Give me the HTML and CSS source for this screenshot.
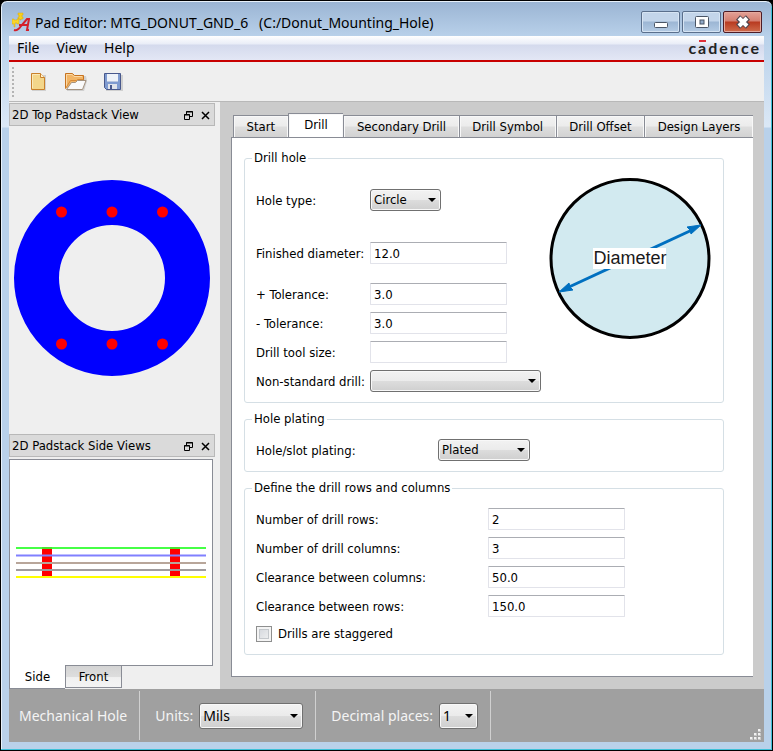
FILE: index.html
```
<!DOCTYPE html>
<html lang="en">
<head>
  <meta charset="UTF-8">
  <title>Pad Editor: MTG_DONUT_GND_6</title>
  <link rel="stylesheet" href="styles.css">
</head>
<body>
<div class="window">

  <header class="titlebar">
    <svg class="app-icon" width="18" height="20" viewBox="0 0 18 20">
      <path d="M6 1h5v2h-1v2h1v2H9v1H8V7H6V5h1V3H6z" fill="#f7cf1d" stroke="#d9a90c" stroke-width=".5"/>
      <path d="M0 7h2v1h3V7h2v5H5v-1H3v4H2v-3H0z" fill="#f9d52a" stroke="#d9a90c" stroke-width=".5"/>
      <path d="M2 18c3 1 5-1 7-4l6-7h2l-2 11h2" fill="none" stroke="#d3202b" stroke-width="2"/>
      <path d="M7 13h9" stroke="#d3202b" stroke-width="2"/>
    </svg>
    <h1>Pad Editor: MTG_DONUT_GND_6 &nbsp; (C:/Donut_Mounting_Hole)</h1>
    <div class="window-buttons">
      <button type="button" aria-label="Minimize">
        <svg width="16" height="16" viewBox="0 0 16 16"><rect x="1.500" y="8.500" width="13" height="5" rx="1" fill="#fff" stroke="#4a5565"/></svg>
      </button>
      <button type="button" aria-label="Maximize">
        <svg width="16" height="16" viewBox="0 0 16 16"><rect x="1.500" y="2.500" width="13" height="11" rx="1" fill="#fff" stroke="#4a5565"/><rect x="6" y="6" width="4" height="4" fill="#8fa9c8" stroke="#4a5565"/></svg>
      </button>
      <button type="button" class="close" aria-label="Close">
        <svg width="16" height="16" viewBox="0 0 16 16"><path d="M3 3.500l10 9M13 3.500l-10 9" stroke="#4e4650" stroke-width="6"/><path d="M4 4l8 8M12 4l-8 8" stroke="#fff" stroke-width="4"/></svg>
      </button>
    </div>
  </header>

  <div class="client">
    <nav class="menubar">
      <a href="#">File</a>
      <a href="#">View</a>
      <a href="#">Help</a>
      <span class="brand">c<span class="macron">a</span>dence</span>
    </nav>

    <div class="toolbar">
      <span class="handle"></span>
      <button type="button" aria-label="New">
        <svg width="24" height="24" viewBox="0 0 24 24">
          <path d="M5 5h14v16H5z" fill="#888" opacity=".3"/>
          <path d="M4.500 3.500h9l4 4v12h-13z" fill="#f3d68a" stroke="#c9812b"/>
          <path d="M5.500 18V4.500H13" fill="none" stroke="#fbe9ba"/>
          <path d="M13.500 3.500v4h4" fill="#fff3cf" stroke="#c9812b"/>
        </svg>
      </button>
      <button type="button" aria-label="Open">
        <svg width="24" height="24" viewBox="0 0 24 24">
          <path d="M3 6h19l1 5-3 10H3z" fill="#888" opacity=".3"/>
          <path d="M1.500 18.500v-15h7l2 2h9v5" fill="#f2b566" stroke="#c67321"/>
          <path d="M2.500 17V4.500H8l2 2h8" fill="none" stroke="#fbd9a6"/>
          <path d="M2.500 19.500l5-7h4l2-2h8.500l-3.500 9z" fill="#fafafa" stroke="#a5937f"/>
          <path d="M1.500 18.500l5-8h6l1-1h6" fill="none" stroke="#d68a38"/>
        </svg>
      </button>
      <button type="button" aria-label="Save">
        <svg width="24" height="24" viewBox="0 0 24 24">
          <path d="M5 5h17v16H5z" fill="#888" opacity=".3"/>
          <path d="M3.500 3.500h16v16h-14l-2-2z" fill="#7f9bd0" stroke="#48588c"/>
          <rect x="6" y="4" width="11" height="8" fill="#eef2f8"/>
          <path d="M6 11h11v1H6z" fill="#b9c6df"/>
          <rect x="7" y="14" width="9" height="5" fill="#dfe3ea"/>
          <rect x="9" y="15" width="2" height="4" fill="#48588c"/>
        </svg>
      </button>
    </div>

    <main class="workspace">
      <aside class="docks">
        <section class="dock">
          <div class="dock-title">
            <h2>2D Top Padstack View</h2>
            <button type="button" aria-label="Float">
              <svg width="9" height="9" viewBox="0 0 9 9"><path d="M2.500 3V.500h6v5H6M2 1h7M.500 3.500h5v5h-5zM0 4h6" fill="none" stroke="#000"/></svg>
            </button>
            <button type="button" aria-label="Close">
              <svg width="9" height="9" viewBox="0 0 9 9"><path d="M1 1l7 7M8 1L1 8" stroke="#000" stroke-width="1.500"/></svg>
            </button>
          </div>
          <div class="top-view">
            <svg width="196" height="196" viewBox="0 0 196 196">
              <circle cx="98" cy="98" r="75.500" fill="none" stroke="#00f" stroke-width="45"/>
              <g fill="#f00">
                <circle cx="47.500" cy="32" r="5.500"/><circle cx="98" cy="32" r="5.500"/><circle cx="148.500" cy="32" r="5.500"/>
                <circle cx="47.500" cy="164" r="5.500"/><circle cx="98" cy="164" r="5.500"/><circle cx="148.500" cy="164" r="5.500"/>
              </g>
            </svg>
          </div>
        </section>

        <section class="dock">
          <div class="dock-title">
            <h2>2D Padstack Side Views</h2>
            <button type="button" aria-label="Float">
              <svg width="9" height="9" viewBox="0 0 9 9"><path d="M2.500 3V.500h6v5H6M2 1h7M.500 3.500h5v5h-5zM0 4h6" fill="none" stroke="#000"/></svg>
            </button>
            <button type="button" aria-label="Close">
              <svg width="9" height="9" viewBox="0 0 9 9"><path d="M1 1l7 7M8 1L1 8" stroke="#000" stroke-width="1.500"/></svg>
            </button>
          </div>
          <div class="side-view">
            <svg width="192" height="32" viewBox="0 0 192 32">
              <path d="M27 0h10v30H27zM155 0h10v30h-10z" fill="#f00"/>
              <path d="M1 1h190" stroke="#3f3" stroke-width="2" opacity=".9"/>
              <path d="M1 8.500h190" stroke="#8080ff" stroke-width="2"/>
              <path d="M1 16h190" stroke="#b8a69a" stroke-width="2"/>
              <path d="M1 23h190" stroke="#a09c9e" stroke-width="2"/>
              <path d="M1 30h190" stroke="#ff0" stroke-width="2"/>
            </svg>
          </div>
          <div class="side-tabs">
            <button type="button" class="active">Side</button>
            <button type="button">Front</button>
          </div>
        </section>
      </aside>

      <div class="editor">
        <div class="tabs">
          <button type="button" class="first">Start</button>
          <button type="button" class="active">Drill</button>
          <button type="button">Secondary Drill</button>
          <button type="button">Drill Symbol</button>
          <button type="button">Drill Offset</button>
          <button type="button">Design Layers</button>
        </div>

        <form class="page">
          <fieldset>
            <legend>Drill hole</legend>
            <div class="hole">
              <div class="rows">
                <div class="row spaced">
                  <label for="hole-type">Hole type:</label>
                  <select id="hole-type" class="w-type"><option>Circle</option></select>
                </div>
                <div class="row diameter">
                  <label for="diameter">Finished diameter:</label>
                  <input type="text" id="diameter" value="12.0">
                </div>
                <div class="row">
                  <label for="tol-plus">+ Tolerance:</label>
                  <input type="text" id="tol-plus" value="3.0">
                </div>
                <div class="row">
                  <label for="tol-minus">- Tolerance:</label>
                  <input type="text" id="tol-minus" value="3.0">
                </div>
                <div class="row">
                  <label for="tool-size">Drill tool size:</label>
                  <input type="text" id="tool-size">
                </div>
                <div class="row">
                  <label for="non-standard">Non-standard drill:</label>
                  <select id="non-standard" class="w-drill"><option></option></select>
                </div>
              </div>
              <svg class="diagram" width="162" height="162" viewBox="0 0 162 162">
                <circle cx="81" cy="80.500" r="79" fill="#d2eaf0" stroke="#000" stroke-width="3"/>
                <path d="M20 109L143 52" stroke="#0070c0" stroke-width="3"/>
                <path d="M10 114l10-9 1 4 3 3zM152 47l-14 2 3 3 1 4z" fill="#0070c0" stroke="#0070c0"/>
                <rect x="44" y="70" width="73" height="21" fill="#fff"/>
                <text x="81" y="86" text-anchor="middle">Diameter</text>
              </svg>
            </div>
          </fieldset>

          <fieldset>
            <legend>Hole plating</legend>
            <div class="rows">
              <div class="row plating">
                <label for="plating">Hole/slot plating:</label>
                <select id="plating" class="w-plating"><option>Plated</option></select>
              </div>
            </div>
          </fieldset>

          <fieldset>
            <legend>Define the drill rows and columns</legend>
            <div class="rows">
              <div class="row wide">
                <label for="drill-rows">Number of drill rows:</label>
                <input type="text" id="drill-rows" value="2">
              </div>
              <div class="row wide">
                <label for="drill-cols">Number of drill columns:</label>
                <input type="text" id="drill-cols" value="3">
              </div>
              <div class="row wide">
                <label for="clear-cols">Clearance between columns:</label>
                <input type="text" id="clear-cols" value="50.0">
              </div>
              <div class="row wide">
                <label for="clear-rows">Clearance between rows:</label>
                <input type="text" id="clear-rows" value="150.0">
              </div>
              <div class="check">
                <input type="checkbox" id="staggered">
                <label for="staggered">Drills are staggered</label>
              </div>
            </div>
          </fieldset>
        </form>
      </div>
    </main>

    <footer class="statusbar">
      <div class="cell">Mechanical Hole</div>
      <div class="cell">
        <label for="units">Units:</label>
        <select id="units" class="w-units"><option>Mils</option></select>
      </div>
      <div class="cell">
        <label for="decimals">Decimal places:</label>
        <select id="decimals" class="w-decimals"><option>1</option></select>
      </div>
      <svg class="grip" width="11" height="11" viewBox="0 0 11 11">
        <path d="M8 0h3v3H8zM4 4h3v3H4zM8 4h3v3H8zM0 8h3v3H0zM4 8h3v3H4zM8 8h3v3H8z" fill="#c8c8c8"/>
        <path d="M8 0h2v2H8zM4 4h2v2H4zM8 4h2v2H8zM0 8h2v2H0zM4 8h2v2H4zM8 8h2v2H8z" fill="#f2f2f2"/>
      </svg>
    </footer>
  </div>
</div>
</body>
</html>
```
FILE: styles.css
```
:root {
  --frame: #b9d1ea;
  --panel: #efefef;
  --gutter: #cbcbcb;
  --line: #898c95;
  --group: #d5dfe5;
  --ui-font: "DejaVu Sans Condensed", "DejaVu Sans", sans-serif;
  --title-font: "Noto Sans", "Open Sans", sans-serif;
}
* {
  box-sizing: border-box;
}
body {
  margin: 0;
  background: #000;
  color: #000;
  font-family: var(--ui-font);
  font-size: 13px;
  line-height: 16px;
}
button, input, select {
  font: inherit;
  color: inherit;
  margin: 0;
}
h1, h2 {
  margin: 0;
  font-weight: normal;
}
.window {
  display: flex;
  flex-direction: column;
  min-height: 100vh;
  padding: 0 7px 8px;
  border: 1px solid #000;
  border-radius: 7px 7px 0 0;
  background: linear-gradient(#9ab4d3, var(--frame) 36px, #dbe8f6 126px, var(--frame) 127px);
  box-shadow: inset 0 1px #e8f1fa, inset -1px -1px #3dc0d8, inset 1px 0 #e8f1fa;
}

/* title bar */
.titlebar {
  display: flex;
  align-items: center;
  height: 35px;
  padding-left: 4px;
}
.titlebar h1 {
  flex: 1;
  margin-left: 5px;
  padding-top: 8px;
  font-family: var(--title-font);
  font-size: 14px;
  line-height: 20px;
}
.app-icon {
  margin-top: 6px;
}
.window-buttons {
  display: flex;
  align-self: flex-start;
  gap: 2px;
  padding: 10px 3px 0 0;
}
.window-buttons button {
  display: flex;
  align-items: center;
  justify-content: center;
  width: 39px;
  height: 22px;
  padding: 0;
  border: 1px solid #5a6f8c;
  border-radius: 2px;
  background: linear-gradient(#c3d5ea 45%, #9cb6d4 50%, #b4cbe4);
  box-shadow: inset 0 0 0 1px #d6e4f3;
}
.window-buttons .close {
  border-color: #4d1c26;
  background: linear-gradient(#e3a197, #d47f70 45%, #b83a20 50%, #cf6c4c);
  box-shadow: inset 0 0 0 1px #e5aa9e;
}

/* menu and toolbar */
.client {
  display: flex;
  flex: 1;
  flex-direction: column;
  margin: 0 1px;
}
.client, .toolbar {
  background: var(--panel);
}
.menubar {
  display: flex;
  align-items: center;
  gap: 17px;
  height: 26px;
  padding: 0 3px 0 8px;
  border-bottom: 2px solid #c80000;
  background: linear-gradient(#fff, #e9edf7 8px, #d4daed 9px, #e3e7f5);
  font-family: var(--title-font);
  font-size: 14px;
}
.menubar a {
  color: #000;
  text-decoration: none;
}
.brand {
  margin-left: auto;
  color: #222;
  font-family: Lato, sans-serif;
  font-size: 16px;
  font-weight: 700;
  letter-spacing: 2px;
}
.macron {
  background: linear-gradient(#e0303a, #e0303a) 1px 2px / 7px 2px no-repeat;
}
.toolbar {
  display: flex;
  align-items: center;
  gap: 13px;
  height: 40px;
  padding-left: 3px;
  border-bottom: 1px solid #b8b8b8;
}
.toolbar button {
  display: flex;
  padding: 0;
  border: 0;
  background: none;
}
.handle {
  width: 2px;
  height: 30px;
  background: repeating-linear-gradient(#b4b4b4 0 2px, transparent 2px 4px);
}

/* docked views */
.workspace {
  display: flex;
  flex: 1;
  background: var(--gutter);
}
.docks {
  display: flex;
  flex-direction: column;
  width: 211px;
  padding-top: 1px;
  background: var(--panel);
}
.dock:first-child {
  display: flex;
  flex: 1;
  flex-direction: column;
}
.dock-title {
  display: flex;
  align-items: center;
  gap: 8px;
  height: 23px;
  margin-right: 5px;
  padding: 1px 4px 0 2px;
  border: 1px solid #b8b8b8;
  background: #dadada;
}
.dock-title h2 {
  flex: 1;
  font-size: 13px;
}
.dock-title button {
  display: flex;
  padding: 0;
  border: 0;
  background: none;
}
.top-view {
  display: flex;
  flex: 1;
  align-items: center;
  justify-content: center;
  padding: 0 5px 5px 0;
}
.side-view {
  display: flex;
  align-items: center;
  justify-content: center;
  height: 207px;
  margin: 2px 7px 0 0;
  border: 1px solid var(--line);
  background: #fff;
}
.side-tabs {
  display: flex;
  align-items: flex-start;
}
.side-tabs button {
  width: 57px;
  height: 22px;
  padding: 0;
  border: 1px solid var(--line);
  border-top: 0;
  background: linear-gradient(#d4d4d4, #ddd 50%, #f0f0f0 55%, #f4f4f4);
}
.side-tabs .active {
  width: 56px;
  height: 24px;
  margin-top: -1px;
  border-right: 0;
  background: #fff;
}

/* tabbed editor */
.editor {
  display: flex;
  flex: 1;
  flex-direction: column;
  padding: 11px 11px 12px;
}
.tabs {
  display: flex;
  align-items: flex-end;
  height: 24px;
  padding-left: 2px;
}
.tabs button {
  flex: 1 1 auto;
  height: 23px;
  margin-bottom: -1px;
  padding: 1px 11px 0;
  border: 1px solid var(--line);
  border-right: 0;
  background: linear-gradient(#f2f2f2, #ececec 48%, #dedede 52%, #d2d2d2);
  box-shadow: inset 1px 1px #f8f8f8, inset -1px 0 #f8f8f8;
  white-space: nowrap;
}
.tabs .active {
  height: 25px;
  padding: 0 14px 2px;
  border-bottom: 0;
  background: #fff;
}
.page {
  flex: 1;
  padding: 12px 29px 20px 12px;
  border: 1px solid var(--line);
  border-right: 0;
  background: #fff;
}
fieldset {
  min-width: 0;
  margin: 0 0 8px;
  padding: 12px 12px 10px 7px;
  border: 1px solid var(--group);
  border-radius: 3px;
}
fieldset:last-child {
  margin-bottom: 0;
}
legend {
  padding: 0 2px;
}
.hole {
  display: flex;
  align-items: flex-start;
  justify-content: space-between;
}
.hole .rows {
  padding-top: 11px;
}
.rows {
  display: flex;
  flex-direction: column;
  gap: 7px;
  padding-left: 4px;
}
.row {
  display: grid;
  grid-template-columns: 114px auto;
  align-items: center;
  justify-content: start;
  height: 22px;
}
.row.plating {
  grid-template-columns: 182px auto;
}
.row.wide {
  grid-template-columns: 232px auto;
}
.row.spaced {
  margin-bottom: 24px;
}
.row.diameter {
  margin-bottom: 12px;
}
.row label {
  padding-top: 1px;
  white-space: nowrap;
}
input[type="text"] {
  width: 137px;
  height: 22px;
  padding: 1px 3px 0;
  border: 1px solid #e2e3ea;
  border-top-color: #abadb3;
  border-radius: 1px;
  background: #fff;
}
select {
  appearance: none;
  height: 22px;
  padding: 0 20px 0 3px;
  border: 1px solid #707070;
  border-radius: 3px;
  background:
    url("data:image/svg+xml,%3Csvg xmlns='http://www.w3.org/2000/svg' width='8' height='4'%3E%3Cpath d='M0 0h8L4 4z'/%3E%3C/svg%3E") right 4px center no-repeat,
    linear-gradient(#f2f2f2, #ebebeb 50%, #ddd 50%, #cfcfcf);
  box-shadow: inset 0 0 0 1px #f8f8f8;
}
.w-type { width: 71px; }
.w-drill { width: 171px; }
.w-plating { width: 92px; }
.w-units { width: 104px; }
.w-decimals { width: 39px; }
.check {
  display: flex;
  align-items: center;
  gap: 6px;
  height: 20px;
}
.check input {
  appearance: none;
  width: 16px;
  height: 16px;
  border: 1px solid #8e8f8f;
  background: linear-gradient(135deg, #cfd3d9, #f4f4f4);
  box-shadow: inset 0 0 0 2px #f4f4f4, inset 0 0 0 3px #c4c8cc;
}
.diagram text {
  fill: #1a1a1a;
  font-family: "Liberation Sans", Arial, sans-serif;
  font-size: 18px;
}

/* status bar */
.statusbar {
  display: flex;
  align-items: center;
  height: 53px;
  padding: 2px 3px 2px 0;
  background: #a0a0a0;
  color: #f4f4f4;
  font-family: var(--title-font);
  font-size: 14px;
}
.cell {
  display: flex;
  align-items: center;
  align-self: stretch;
  gap: 6px;
  padding: 0 12px 0 15px;
  border-right: 1px solid #d0d0d0;
}
.cell:first-child {
  padding: 0 12px 0 10px;
}
.statusbar select {
  height: 26px;
  color: #000;
}
.grip {
  align-self: flex-end;
  margin-left: auto;
}
```
